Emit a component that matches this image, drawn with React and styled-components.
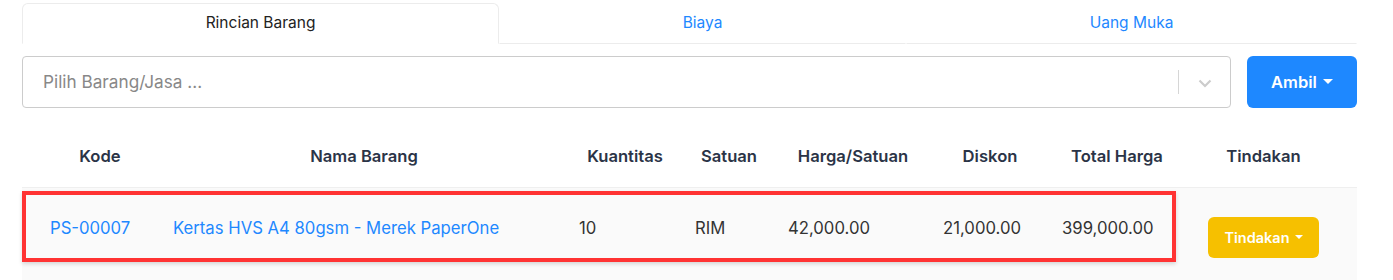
import styled, { createGlobalStyle } from "styled-components";

const Global = createGlobalStyle`
  body {
    margin: 0;
    background: #fff;
    font-family: Inter, "Noto Sans", sans-serif;
  }
`;

const columns = [
  { title: "Kode", width: 146, head: "0 0 0 10px", pad: 28 },
  { title: "Nama Barang", width: 392, head: "0", pad: 5 },
  { title: "Kuantitas", width: 130, head: "0", pad: 19 },
  { title: "Satuan", width: 78, head: "0", pad: 5 },
  { title: "Harga/Satuan", width: 170, head: "0", pad: 20 },
  { title: "Diskon", width: 104, head: "0", pad: 5 },
  { title: "Total Harga", width: 150, head: "0", pad: 20 },
  { title: "Tindakan", width: 165, head: "0 22px 0 0", pad: 0 },
];

const row = {
  values: ["PS-00007", "Kertas HVS A4 80gsm - Merek PaperOne", "10", "RIM", "42,000.00", "21,000.00", "399,000.00"],
  links: [true, true],
};

export default function App() {
  return (
    <>
      <Global />
      <Page>
        <Tabs>
          <Tab active>Rincian Barang</Tab>
          <Tab>Biaya</Tab>
          <Tab>Uang Muka</Tab>
        </Tabs>

        <Toolbar>
          <Select>
            <Placeholder>Pilih Barang/Jasa ...</Placeholder>
            <Separator />
            <Chevron>
              <svg width="14" height="9" viewBox="0 0 14 9" fill="none">
                <path d="M1.5 1.5 L7 7 L12.5 1.5" stroke="#cccccc" strokeWidth="2.2" />
              </svg>
            </Chevron>
          </Select>
          <PrimaryButton>
            Ambil<Caret />
          </PrimaryButton>
        </Toolbar>

        <Table>
          <HeadRow>
            {columns.map((c) => (
              <HeadCell key={c.title} $pad={c.head}>
                {c.title}
              </HeadCell>
            ))}
          </HeadRow>
          <BodyRow>
            {row.values.map((v, i) => (
              <Cell key={i} $pad={columns[i].pad} $link={row.links[i]}>
                {v}
              </Cell>
            ))}
            <ActionCell>
              <WarnButton>
                Tindakan<Caret $small />
              </WarnButton>
            </ActionCell>
            <Highlight />
          </BodyRow>
        </Table>
      </Page>
    </>
  );
}

const Page = styled.div`
  width: 1335px;
  padding: 3px 0 0 22px;
`;

const Tabs = styled.div`
  display: flex;
  height: 41px;
`;

const Tab = styled.div`
  flex: 1 1 auto;
  display: flex;
  align-items: center;
  justify-content: center;
  padding-bottom: 2px;
  font-size: 15.5px;
  color: ${(p) => (p.active ? "#222" : "#1e88ff")};
  border: 1px solid ${(p) => (p.active ? "#ececec" : "transparent")};
  border-bottom: 1px solid ${(p) => (p.active ? "transparent" : "#ececec")};
  border-radius: ${(p) => (p.active ? "6px 6px 0 0" : "0")};
  background: #fff;
`;

const Toolbar = styled.div`
  display: flex;
  gap: 16px;
  margin-top: 12px;
  height: 52px;
`;

const Select = styled.div`
  flex: 1;
  display: flex;
  align-items: center;
  border: 1px solid #cccccc;
  border-radius: 4px;
  padding-left: 20px;
`;

const Placeholder = styled.div`
  flex: 1;
  font-size: 17.2px;
  color: #888;
  padding-bottom: 1px;
`;

const Separator = styled.div`
  width: 1px;
  height: 24px;
  background: #d6d6d6;
`;

const Chevron = styled.div`
  width: 51px;
  display: flex;
  justify-content: center;
  padding-top: 3px;
`;

const Caret = styled.span`
  display: inline-block;
  width: 0;
  height: 0;
  margin-left: ${(p) => (p.$small ? 5 : 6)}px;
  border-left: ${(p) => (p.$small ? 4 : 5)}px solid transparent;
  border-right: ${(p) => (p.$small ? 4 : 5)}px solid transparent;
  border-top: ${(p) => (p.$small ? 4 : 5)}px solid #fff;
  vertical-align: middle;
  position: relative;
  top: -2px;
`;

const PrimaryButton = styled.button`
  width: 110px;
  border: none;
  border-radius: 6px;
  background: #1e88ff;
  color: #fff;
  font-family: inherit;
  font-size: 16.5px;
  font-weight: 600;
`;

const Table = styled.div`
  margin-top: 12px;
`;

const grid = columns.map((c) => `${c.width}px`).join(" ");

const HeadRow = styled.div`
  display: grid;
  grid-template-columns: ${grid};
  height: 67px;
  border-bottom: 1px solid #efefef;
  align-items: center;
`;

const HeadCell = styled.div`
  text-align: center;
  padding: ${(p) => p.$pad};
  font-size: 16.6px;
  font-weight: 600;
  color: #2b3447;
  padding-top: 4px;
`;

const BodyRow = styled.div`
  position: relative;
  display: grid;
  grid-template-columns: ${grid};
  height: 92px;
  background: #fafafa;
`;

const Cell = styled.div`
  padding: 30px 0 0 ${(p) => p.$pad}px;
  font-size: 16.7px;
  color: ${(p) => (p.$link ? "#1e88ff" : "#333")};
  white-space: nowrap;
`;

const ActionCell = styled.div`
  display: flex;
  justify-content: center;
  padding: 29px 22px 0 0;
`;

const WarnButton = styled.button`
  width: 111px;
  height: 41px;
  border: none;
  border-radius: 6px;
  background: #f6c000;
  color: #fff;
  font-family: inherit;
  font-size: 14.5px;
  font-weight: 600;
`;

const Highlight = styled.div`
  position: absolute;
  left: 0;
  top: 3px;
  width: 1154px;
  height: 71px;
  box-sizing: border-box;
  border: 4px solid #ff3333;
  box-shadow: 0 2px 4px rgba(0, 0, 0, 0.15);
  pointer-events: none;
`;
